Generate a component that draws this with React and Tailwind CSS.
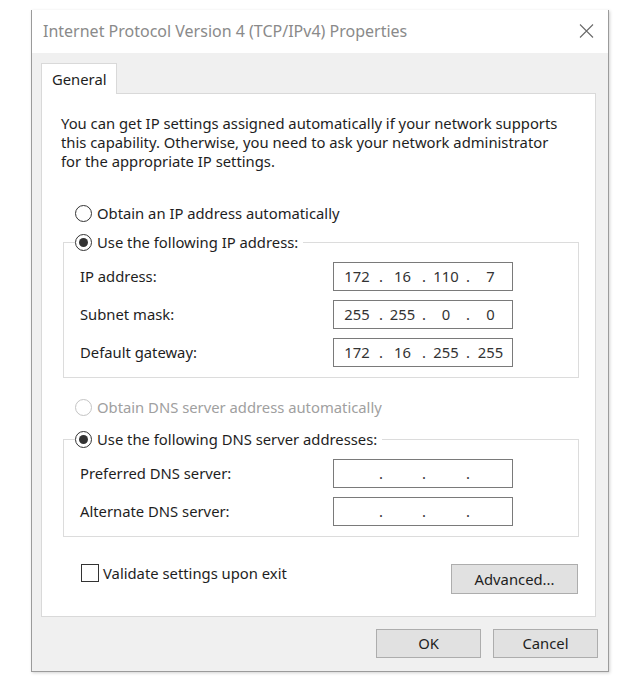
import React from "react";

function Radio({ checked, disabled }) {
  return (
    <span
      className={
        "w-[17px] h-[17px] rounded-full border flex items-center justify-center bg-white shrink-0 " +
        (disabled ? "border-[#c4c4c4]" : "border-[#333333]")
      }
    >
      {checked ? <span className="w-[9px] h-[9px] rounded-full bg-[#333333]" /> : null}
    </span>
  );
}

function RadioRow({ checked, disabled, label }) {
  return (
    <div className="flex items-center gap-[5px] h-[20px]">
      <Radio checked={checked} disabled={disabled} />
      <span className={disabled ? "text-[#a0a0a0]" : "text-[#1e1e1e]"}>{label}</span>
    </div>
  );
}

function IpField({ octets }) {
  const widths = ["w-[46px]", "w-[41px]", "w-[42px]", "w-[43px]"];
  const o = octets || ["", "", "", ""];
  return (
    <div className="w-[180px] h-[29px] border border-[#7a7a7a] bg-white flex items-center text-[#333333]">
      {o.map((v, i) => (
        <React.Fragment key={i}>
          {i > 0 ? <span className="w-[2px] flex justify-center">.</span> : null}
          <span className={widths[i] + " flex justify-center"}>{v}</span>
        </React.Fragment>
      ))}
    </div>
  );
}

function FieldRow({ label, octets }) {
  return (
    <div className="flex items-center h-[29px]">
      <span className="w-[253px] text-[#1e1e1e]">{label}</span>
      <IpField octets={octets} />
    </div>
  );
}

function Button({ children, className }) {
  return (
    <div
      className={
        "bg-[#e1e1e1] border border-[#adadad] flex items-center justify-center text-[#1e1e1e] " +
        (className || "")
      }
    >
      {children}
    </div>
  );
}

export default function App() {
  return (
    <div className="w-[634px] h-[683px] bg-white pt-[10px] pl-[31px] font-['Noto_Sans',sans-serif] text-[14.8px] leading-[19px] overflow-hidden">
      <div className="w-[578px] h-[662px] border-l border-r border-b border-[#9b9b9b] flex flex-col shadow-[1px_1px_3px_rgba(0,0,0,0.18)]">
        <div className="h-[43px] bg-white flex items-center justify-between pl-[11px] pr-[14px] shrink-0">
          <span className="text-[16px] text-[#8a8a8a]">
            Internet Protocol Version 4 (TCP/IPv4) Properties
          </span>
          <svg width="15" height="14" viewBox="0 0 15 14" className="mt-[-1px]">
            <path d="M1 0.5 L14 13.5 M14 0.5 L1 13.5" stroke="#6a6a6a" strokeWidth="1.1" fill="none" />
          </svg>
        </div>
        <div className="flex-1 bg-[#f0f0f0] flex flex-col pl-[9px] pr-[12px] pt-[10px]">
          <div className="flex">
            <div className="h-[31px] w-[76px] border border-b-0 border-[#d9d9d9] bg-white pl-[10px] flex items-center relative z-10 -mb-px text-[#1e1e1e]">
              General
            </div>
          </div>
          <div className="h-[524px] border border-[#d9d9d9] bg-white pl-[21px] pr-[16px] pt-[20px]">
            <p className="-ml-[2px] text-[#1e1e1e]">
              You can get IP settings assigned automatically if your network supports
              <br />
              this capability. Otherwise, you need to ask your network administrator
              <br />
              for the appropriate IP settings.
            </p>
            <div className="mt-[32px] pl-[12px]">
              <RadioRow label="Obtain an IP address automatically" />
            </div>
            <fieldset className="mt-[9px] border border-[#dcdcdc] px-0 pb-[10px]">
              <legend className="ml-[11px] pr-[5px]">
                <RadioRow checked label="Use the following IP address:" />
              </legend>
              <div className="pl-[16px] pt-[10px] flex flex-col gap-[9px]">
                <FieldRow label="IP address:" octets={["172", "16", "110", "7"]} />
                <FieldRow label="Subnet mask:" octets={["255", "255", "0", "0"]} />
                <FieldRow label="Default gateway:" octets={["172", "16", "255", "255"]} />
              </div>
            </fieldset>
            <div className="mt-[19px] pl-[12px]">
              <RadioRow disabled label="Obtain DNS server address automatically" />
            </div>
            <fieldset className="mt-[12px] border border-[#dcdcdc] px-0 pb-[10px]">
              <legend className="ml-[11px] pr-[5px]">
                <RadioRow checked label="Use the following DNS server addresses:" />
              </legend>
              <div className="pl-[16px] pt-[10px] flex flex-col gap-[9px]">
                <FieldRow label="Preferred DNS server:" />
                <FieldRow label="Alternate DNS server:" />
              </div>
            </fieldset>
            <div className="mt-[27px] flex justify-between items-start">
              <div className="ml-[18px] flex items-center gap-[4px] h-[18px]">
                <span className="w-[18px] h-[18px] border border-[#333333] bg-white" />
                <span className="text-[#1e1e1e]">Validate settings upon exit</span>
              </div>
              <Button className="w-[127px] h-[30px] mr-[1px]">Advanced...</Button>
            </div>
          </div>
          <div className="mt-[12px] -mr-[2px] flex justify-end gap-[12px]">
            <Button className="w-[105px] h-[29px]">OK</Button>
            <Button className="w-[105px] h-[29px]">Cancel</Button>
          </div>
        </div>
      </div>
    </div>
  );
}
